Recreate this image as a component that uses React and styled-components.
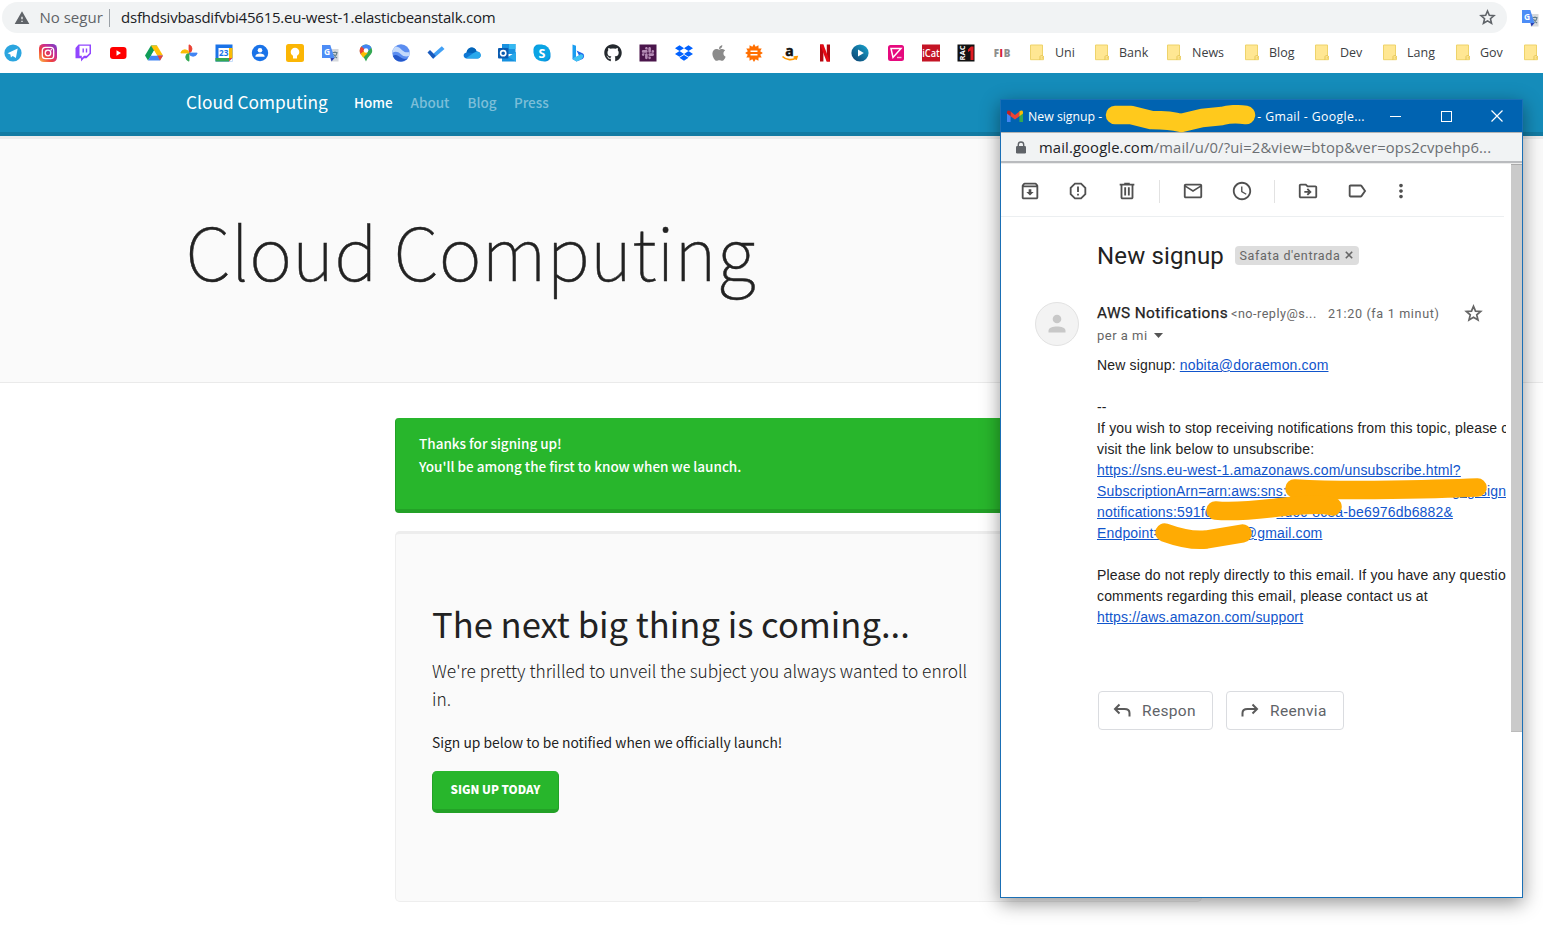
import React from "react";
import styled, { createGlobalStyle } from "styled-components";
import { FaApple, FaDropbox, FaGithub, FaSlack } from "react-icons/fa";
import {
  MdOutlineArchive, MdReportGmailerrorred, MdMailOutline, MdAccessTime,
  MdOutlineDriveFileMove, MdLabelOutline, MdMoreVert, MdWarning,
} from "react-icons/md";

const SANS = `"Noto Sans CJK SC", "Noto Sans CJK JP", sans-serif`;
const UI = `"Open Sans", "Noto Sans", sans-serif`;

const Global = createGlobalStyle`
  * { box-sizing: border-box; }
  html, body { margin: 0; background: #fff; overflow: hidden; }
  h1, h2, p { margin: 0; }
  svg { display: block; flex: none; }
`;
const Screen = styled.div`
  position: relative; width: 1543px; height: 933px; overflow: hidden;
  background: #fff; color: #222; font-family: ${SANS};
`;
const T = styled.span`
  white-space: pre; letter-spacing: ${(p) => p.$ls || 0}px;
`;

/* Browser chrome */
const Chrome = styled.div`height: 73px; display: flex; flex-direction: column; font-family: ${UI};`;
const AddressRow = styled.div`display: flex; align-items: center; padding: 2px 0 0 2px; gap: 14px; height: 33px;`;
const Omnibox = styled.div`
  width: 1505px; height: 31px; border-radius: 16px; background: #f1f3f4; flex: none;
  display: flex; align-items: center; padding: 0 10px 0 12px; font-size: 15px; line-height: 31px; color: #202124;
`;
const Security = styled.div`
  display: flex; align-items: center; gap: 9.5px; width: 95px; color: #5f6368; white-space: nowrap;
`;
const Divider = styled.div`width: 1px; height: 18px; background: #9aa0a6; margin-right: 11px; flex: none;`;
const Grow = styled.div`flex: 1;`;
const Bookmarks = styled.div`display: flex; align-items: center; height: 39px; padding-left: 3px;`;
const FaviconStrip = styled.div`display: flex; width: 1026.5px; flex: none;`;
const Favicon = styled.div`width: 35.34px; height: 20px; flex: none; display: flex; align-items: center; padding-left: 0.5px;`;
const Folder = styled.div`
  width: ${(p) => p.$w}px; flex: none; display: flex; align-items: center; gap: ${(p) => p.$gap}px;
  font-size: 12.5px; color: #3c4043;
`;

/* Site */
const Nav = styled.nav`
  height: 63px; background: #158cba; border-bottom: 4px solid #127ba3;
  display: flex; align-items: center; padding: 0 0 2px 186px; color: #fff;
`;
const Brand = styled.div`font-size: 17.3px; line-height: 24px; width: 168px; white-space: nowrap;`;
const NavLink = styled.div`
  width: ${(p) => p.$w}px; font-size: 13.5px; font-weight: 500; line-height: 24px; white-space: nowrap;
  color: ${(p) => (p.$active ? "#fff" : "rgba(255,255,255,.45)")};
`;
const Hero = styled.header`
  height: 247px; background: #fafafa; border-top: 3px solid #ececec; border-bottom: 1px solid #eaeaea; padding: 70px 0 0 185.5px;
`;
const HeroTitle = styled.h1`
  font-size: 73px; font-weight: 100; line-height: 80px; white-space: nowrap; -webkit-text-stroke: 0.5px #222;
`;
const Content = styled.main`width: 807px; margin: 35px 0 0 395px; display: flex; flex-direction: column; gap: 18px;`;
const Alert = styled.div`
  height: 95px; border-radius: 4px; background: #28b62c; border: 1px solid #23a127; border-width: 0 1px 4px 1px;
  padding: 14px 23px; color: #fff; font-size: 13.5px; line-height: 23px; font-weight: 500;
`;
const Card = styled.section`
  height: 371px; border: 1px solid #eee; border-top: 3px solid #ededed; border-radius: 5px; background: #fafafa;
  padding: 65px 36px; display: flex; flex-direction: column; align-items: flex-start;
`;
const CardTitle = styled.h2`font-size: 34.6px; font-weight: 400; line-height: 48px; white-space: nowrap;`;
const Lead = styled.p`font-size: 17.32px; font-weight: 300; line-height: 28px; margin-top: 10px; white-space: nowrap;`;
const Note = styled.p`font-size: 13.85px; line-height: 23px; margin-top: 18px; color: #222;`;
const SignUp = styled.div`
  width: 127px; height: 42px; margin-top: 17px; border-radius: 5px; background: #28b62c;
  border: 1px solid #23a127; border-width: 0 1px 4px; color: #fff; font-size: 11.6px; font-weight: 900;
  line-height: 37px; text-align: center; white-space: nowrap;
`;

/* Popup window */
const Popup = styled.div`
  position: absolute; left: 1000px; top: 99px; width: 523px; height: 799px; background: #fff;
  border: 1px solid #1a6fb5; box-shadow: 0 5px 18px rgba(0,0,0,.42);
  font-family: Roboto, sans-serif; color: #222;
`;
const TitleBar = styled.div`
  height: 32px; background: #0063b1; display: flex; align-items: center; color: #fff; padding-left: 6px;
  font-family: ${UI}; font-size: 12.3px;
`;
const TitleText = styled.div`display: flex; margin-left: 5px; white-space: pre; width: 342.6px; flex: none;`;
const Redacted = styled.span`width: ${(p) => p.$w}px; display: inline-block; flex: none;`;
const WinButton = styled.div`width: 50.5px; flex: none; display: flex; justify-content: center;`;
const PopupUrl = styled.div`
  height: 31px; background: #f1f3f4; border-top: 1px solid #b4b4b4; border-bottom: 2px solid #b9bbbe;
  display: flex; align-items: center; padding-left: 15px; gap: 13px; font-family: ${UI}; font-size: 14.8px; color: #202124;
  white-space: nowrap;
`;
const Muted = styled.span`color: #6b6f73;`;
const MailArea = styled.div`display: flex; height: 734px; border-top: 1px solid #ececec;`;
const Mail = styled.div`width: 505px; overflow: hidden;`;
const ScrollTrack = styled.div`width: 11px; height: 568px; margin-left: 5px; background: #cacaca; border-top: 1px solid #aaa; border-bottom: 1px solid #bbb;`;
const Toolbar = styled.div`
  height: 53px; width: 503px; border-bottom: 1px solid #eceff1; display: flex; align-items: center;
  padding: 2px 0 0 18px; color: #5f6368;
`;
const Tool = styled.div`width: ${(p) => p.$w}px; display: flex; color: #505050;`;
const Sep = styled.div`width: 1px; height: 23px; background: #e2e2e2; margin-right: ${(p) => p.$r}px;`;
const Subject = styled.div`display: flex; align-items: center; padding: 26px 0 0 96px; height: 52px; font-size: 24px; white-space: nowrap;`;
const SubjectText = styled.div`width: 138px; line-height: 26px;`;
const Chip = styled.div`
  height: 19px; width: 124px; border-radius: 4px; background: #ddd; color: #666; font-size: 12.5px; margin-bottom: 2px;
  display: flex; align-items: center; gap: 5px; padding-left: 4.5px; white-space: nowrap;
`;
const Sender = styled.div`display: flex; padding: 33px 0 0 34px;`;
const Avatar = styled.div`
  width: 44px; height: 44px; border-radius: 50%; background: #f3f3f3; border: 1px solid #e2e2e2;
  display: flex; align-items: center; justify-content: center; margin-right: 18px;
`;
const SenderInfo = styled.div`color: #666; font-size: 12.6px; white-space: nowrap;`;
const SenderLine = styled.div`display: flex; align-items: center; height: 22px;`;
const Name = styled.div`font-size: 15.4px; font-weight: 400; color: #222; width: 134px; -webkit-text-stroke: 0.25px #222;`;
const Addr = styled.div`width: 97px;`;
const Time = styled.div`width: 135px;`;
const ToLine = styled.div`display: flex; align-items: center; gap: 6px; height: 22px; font-size: 13px;`;
const Body = styled.div`
  padding: 9px 0 0 96px; font-family: "Liberation Sans", Arial, sans-serif; font-size: 14px; line-height: 21px; color: #222;
  letter-spacing: 0.155px;
`;
const Line = styled.div`height: 21px; white-space: pre; display: flex;`;
const Link = styled.span`color: #15c; text-decoration: underline;`;
const Scribble = styled.svg`position: absolute; left: ${(p) => p.$x}px; top: ${(p) => p.$y}px; pointer-events: none;`;
const Actions = styled.div`display: flex; gap: 13px; padding: 63px 0 0 97px;`;
const Action = styled.div`
  width: ${(p) => p.$w}px; height: 39px; border: 1px solid #dadce0; border-radius: 4px; display: flex; align-items: center;
  gap: 11px; padding-left: 14px; font-size: 15.5px; color: #5f6368;
`;

const I = ({ children }) => (
  <svg width="18" height="18" viewBox="0 0 18 18" fill="none">{children}</svg>
);
const txt = { fontFamily: "Open Sans, sans-serif", fontWeight: 700, textAnchor: "middle" };

const Star = ({ size, color }) => (
  <svg width={size} height={size} viewBox="0 0 24 24" fill="none">
    <path d="M12 3.800l2.300 5.400 5.900.5-4.500 3.900 1.400 5.700-5.100-3.100-5.100 3.100 1.400-5.700-4.500-3.900 5.900-.5z" stroke={color} strokeWidth="2" />
  </svg>
);
const Lock = () => (
  <svg width="10" height="13" viewBox="0 0 10 13">
    <path d="M2.300 5.500V3.700a2.700 2.700 0 0 1 5.400 0v1.800" fill="none" stroke="#5f6368" strokeWidth="1.400" />
    <rect y="5" width="10" height="7.500" rx="1.200" fill="#5f6368" />
  </svg>
);

const Translate = () => (
  <I>
    <path d="M7 5h10.500v12.500H10z" fill="#d5d8dc" />
    <path d="M11.500 8.500h5M14 7.500v1M16 9c-.8 2.600-2 4-3.500 5M12.500 10c.6 1.800 2 3 3.500 4" stroke="#607d8b" strokeWidth="1.100" />
    <path d="M1 1h8.300l4.200 13H1z" fill="#4d8df6" />
    <path d="M9.500 14h4l-3 3.500z" fill="#2a3fb0" />
    <text x="6" y="10.800" fontSize="8.500" fill="#fff" {...txt}>G</text>
  </I>
);
const Gear = () => {
  const pts = Array.from({ length: 24 }, (_, i) => {
    const r = i % 2 ? 6.4 : 8.9;
    const a = (i * Math.PI) / 12;
    return `${9 + r * Math.cos(a)},${9 + r * Math.sin(a)}`;
  }).join(" ");
  return <I><polygon points={pts} fill="#ff6f00" /><path d="M5.500 7.300h7M5.500 10.700h7" stroke="#fff" strokeWidth="1.500" /></I>;
};

const favicons = [
  <I><circle cx="9" cy="9" r="8.6" fill="#2ba5df" /><path d="M3.500 9.200l10.200-4.600-1.800 9.300-3.200-2-1.800 1.700-.5-3.200z" fill="#fff" /></I>,
  <I>
    <defs>
      <linearGradient id="ig" x1="0" y1="1" x2="1" y2="0">
        <stop offset="0" stopColor="#fdc04d" /><stop offset=".35" stopColor="#f0443c" />
        <stop offset=".65" stopColor="#c92d92" /><stop offset="1" stopColor="#6a3fd0" />
      </linearGradient>
    </defs>
    <rect width="18" height="18" rx="4.500" fill="url(#ig)" />
    <rect x="3.300" y="3.300" width="11.400" height="11.400" rx="3.200" stroke="#fff" strokeWidth="1.300" />
    <circle cx="9" cy="9" r="2.800" stroke="#fff" strokeWidth="1.300" /><circle cx="12.300" cy="5.700" r=".8" fill="#fff" />
  </I>,
  <I>
    <path d="M4.500.5H17v9.300l-4.500 4.500H10L7 17.500v-3.200H1.500V4z" fill="#9146ff" />
    <path d="M5.500 1.800h10v7.300l-2.700 2.700H10L7.800 14v-2.200H5.500z" fill="#fff" />
    <path d="M9.200 4.500v4M12.500 4.500v4" stroke="#9146ff" strokeWidth="1.400" />
  </I>,
  <I><rect x="1" y="3" width="16.500" height="12" rx="3" fill="#f00" /><path d="M7.500 6.300v5.400L12 9z" fill="#fff" /></I>,
  <I>
    <path d="M6 1.500h6L6 12l-3 4.500L0 11.500z" fill="#0f9d58" /><path d="M6 1.500h6l6 10h-6z" fill="#ffc107" />
    <path d="M6 11.500h12l-3 5H3z" fill="#4285f4" /><path d="M12.500 11.500H18l-3 5z" fill="#ea4335" /><path d="M9 6.500l3 5H6z" fill="#fff" />
  </I>,
  <I>
    <path d="M9 9V.8A4.300 4.300 0 0 1 9 9z" fill="#ea4335" stroke="#ea4335" strokeWidth=".8" /><path d="M9 9h8.200A4.200 4.200 0 0 1 9 9z" fill="#4285f4" stroke="#4285f4" strokeWidth=".8" />
    <path d="M9 9v8.200A4.200 4.200 0 0 1 9 9z" fill="#34a853" stroke="#34a853" strokeWidth=".8" /><path d="M9 9H.8A4.200 4.200 0 0 1 9 9z" fill="#fbbc04" stroke="#fbbc04" strokeWidth=".8" />
  </I>,
  <I>
    <rect x=".5" y=".5" width="17" height="17" fill="#1a73e8" /><path d="M14 4h3.500v10H14z" fill="#fbbc04" />
    <path d="M.5 14H14v3.500H.5z" fill="#34a853" /><path d="M14 14h3.500L14 17.500z" fill="#ea4335" /><path d="M14 17.500 17.500 14v3.500z" fill="#fff" />
    <rect x="3.500" y="4" width="10.500" height="10" fill="#fff" /><text x="8.800" y="12" fontSize="8.200" fill="#1a73e8" {...txt}>23</text>
  </I>,
  <I><circle cx="9" cy="9" r="8.200" fill="#1a73e8" /><circle cx="9" cy="6.200" r="2.300" fill="#fff" /><path d="M4.400 12.300c0-3.600 9.200-3.600 9.200 0v.5H4.400z" fill="#fff" /></I>,
  <I><rect width="18" height="18" rx="2.500" fill="#fbb605" /><circle cx="9" cy="8" r="4.300" fill="#fff" /><path d="M7 11h4v3.500H7z" fill="#fff" /></I>,
  <Translate />,
  <I>
    <path d="M9 .5a6.200 6.200 0 0 1 6.200 6.200c0 4-4.200 5.300-6.200 10.800C7 12 2.800 10.700 2.800 6.700A6.200 6.200 0 0 1 9 .5z" fill="#34a853" />
    <path d="M9 .5a6.200 6.200 0 0 1 5.400 3.200L9 9 4.400 2.600A6.200 6.200 0 0 1 9 .5z" fill="#4285f4" />
    <path d="M4.400 2.600 9 6.500 4 10.700C1.900 8 2.400 4.600 4.400 2.600z" fill="#ea4335" /><path d="M3.500 9.800 8.500 6l2 3.200-4.300 4.600z" fill="#fbbc04" />
    <circle cx="9" cy="6.500" r="2.300" fill="#fff" />
  </I>,
  <I>
    <circle cx="9" cy="9" r="8.700" fill="#5b8df0" /><path d="M.3 9A8.700 8.700 0 0 1 3 2.700c3-.9 5.400 1.800 7.500 3.800s4.500 2 7 1.500c.4 2 0 3-.4 4-3 1-6 .5-8.500-2S3 7 .3 9z" fill="#c3d9fb" />
    <path d="M.8 12c3-2.500 6 0 8 1.500s5 2 7 .5c-3.500 5-12 5-15-2z" fill="#2558c9" />
  </I>,
  <I><path d="M6.200 14.800 3.800 12 14.800 2.200 17.500 5z" fill="#41a0f5" /><path d="M.5 8.500 3 6l5.700 5.800-2.600 2.900z" fill="#185abd" /></I>,
  <I><path d="M4 14.500C-.5 14.500-.3 9 3.500 8.500 4.500 2.500 12 2 13.500 7.200c5.500.3 5.500 7.300.8 7.300z" fill="#0f78d4" /><path d="M3 14.300 10.500 9l3-1.500c5.500.3 5.500 7 .8 7z" fill="#2aa9ec" /><path d="M3.500 8.500C4.500 2.500 12 2 13.500 7.200L10 9z" fill="#0364b8" /></I>,
  <I>
    <rect x="4" y="0" width="13.500" height="10" fill="#1a92e0" /><path d="M11 0h6.500v5H11z" fill="#35b8f1" /><path d="M4 8.500 11 13l7-5v9.500H4z" fill="#1490df" />
    <path d="M18 8v9.500L10 13z" fill="#28a8ea" /><rect x="0" y="4" width="10.500" height="10.500" rx="1" fill="#0a5bb0" /><circle cx="5.200" cy="9.200" r="2.600" stroke="#fff" strokeWidth="1.600" />
  </I>,
  <I><rect x=".5" y=".5" width="12" height="12" rx="5" fill="#0a9ee0" /><rect x="6" y="5.500" width="11.500" height="12" rx="5" fill="#0a8fdc" /><circle cx="9" cy="9" r="8.300" fill="#0aa4e4" /><text x="9" y="13.500" fontSize="12.500" fill="#fff" {...txt}>S</text></I>,
  <I><path d="M3.500.5 7 1.800v11l-3.500 2.500z" fill="#1a9df0" /><path d="M7.500 6.500 14 9.500c2 2 1 4.500-.5 5.500L7.500 17.500 3.500 15l6.500-3.500z" fill="#2069ea" /><path d="M3.500 15 12 10l2.500 1.500c0 3-4 5-7 6z" fill="#3fc3f2" /></I>,
  <FaGithub size={18} color="#24292e" />,
  <I><rect x=".5" y=".5" width="17" height="17" fill="#4a154b" /><g transform="translate(2 2)"><FaSlack size={14} color="#b48bb5" /></g></I>,
  <FaDropbox size={18} color="#0061ff" />,
  <FaApple size={18} color="#8b8b8b" />,
  <Gear />,
  <I><text x="8.500" y="11.500" fontSize="14" fill="#111" stroke="#111" strokeWidth=".5" {...txt}>a</text><path d="M1.500 12.500c4 4 10 4 13.500 1.300M12.500 13l3.500-.3-1 3" stroke="#f90" strokeWidth="1.700" /></I>,
  <I><path d="M4 .5h3.400v17H4z M10.800.5H14v17h-3.200z" fill="#b1060f" /><path d="M4 .5h3.400l6.600 17h-3.400z" fill="#e50914" /></I>,
  <I><defs><linearGradient id="pl" x1="0" y1="1" x2="1" y2="0"><stop offset="0" stopColor="#0c3d6b" /><stop offset="1" stopColor="#18a6d0" /></linearGradient></defs><circle cx="9" cy="9" r="8.600" fill="url(#pl)" /><path d="M7 5.500v7L12.800 9z" fill="#fff" /></I>,
  <I><rect x="1" y="1" width="16" height="16" rx="2.500" fill="#e6097e" /><path d="M4 4.500h10L6 13.500z" stroke="#fff" strokeWidth="1.500" /><path d="M10 13.500h4.500" stroke="#f9b8db" strokeWidth="1.400" /></I>,
  <I><rect y=".5" width="18" height="17" fill="#c41425" /><text x="9" y="13" fontSize="10" fill="#fff" textLength="17.500" lengthAdjust="spacingAndGlyphs" {...txt} fontWeight="600">iCat</text></I>,
  <I><rect x=".5" y=".5" width="17" height="17" fill="#111" /><text transform="translate(8.200 9) rotate(-90)" fontSize="7.500" fill="#fff" {...txt}>RAC</text><path d="M11 5.500 14 2.500h2.500V16h-3V6.500L11 8z" fill="#e01b22" /></I>,
  <I><text x="3.300" y="12.700" fontSize="9.800" fill="#8e8e8e" {...txt} fontWeight="800">F</text><text x="8.300" y="12.700" fontSize="9.800" fill="#d3203c" {...txt} fontWeight="800">I</text><text x="14" y="12.700" fontSize="9.800" fill="#8e8e8e" {...txt} fontWeight="800">B</text></I>,
];

const FolderIcon = () => (
  <svg width="14" height="17" viewBox="0 0 14 17">
    <path d="M.5 1h12v11l1 1.500v2.200H.5z" fill="#ffe793" stroke="#eed36b" />
    <path d="M10 16v-3.500c0-1.200 3.500-1.200 3.500 0 0 1-.500 1.500-1.800 1.500" fill="#ffe793" stroke="#e5c555" />
  </svg>
);
const folders = [
  ["Uni", 65, 11.5], ["Bank", 72, 10.5], ["News", 78, 11.5], ["Blog", 70, 10.5], ["Dev", 68, 11.5], ["Lang", 73, 10.5], ["Gov", 68, 10.5], ["", 20, 0],
];

export default function App() {
  return (
    <Screen>
      <Global />
      <Chrome>
        <AddressRow>
          <Omnibox>
            <Security><MdWarning size={16} /><T>No segur</T></Security>
            <Divider />
            <T $ls={-0.22}>dsfhdsivbasdifvbi45615.eu-west-1.elasticbeanstalk.com</T>
            <Grow />
            <Star size={19} color="#5f6368" />
          </Omnibox>
          <Translate />
        </AddressRow>
        <Bookmarks>
          <FaviconStrip>{favicons.map((icon, i) => <Favicon key={i}>{icon}</Favicon>)}</FaviconStrip>
          {folders.map(([name, w, gap]) => (
            <Folder key={name} $w={w} $gap={gap}><FolderIcon /><T>{name}</T></Folder>
          ))}
        </Bookmarks>
      </Chrome>

      <Nav>
        <Brand>Cloud Computing</Brand>
        <NavLink $w={56.5} $active>Home</NavLink>
        <NavLink $w={57}>About</NavLink>
        <NavLink $w={46.5}>Blog</NavLink>
        <NavLink $w={50}>Press</NavLink>
      </Nav>
      <Hero><HeroTitle>Cloud Computing</HeroTitle></Hero>
      <Content>
        <Alert>Thanks for signing up!<br />You'll be among the first to know when we launch.</Alert>
        <Card>
          <CardTitle>The next big thing is coming...</CardTitle>
          <Lead>We're pretty thrilled to unveil the subject you always wanted to enroll<br />in.</Lead>
          <Note>Sign up below to be notified when we officially launch!</Note>
          <SignUp>SIGN UP TODAY</SignUp>
        </Card>
      </Content>

      <Popup>
        <TitleBar>
          <svg width="16" height="12" viewBox="0 0 16 12">
            <path d="M0 1.500V12h3.600V5z" fill="#4285f4" /><path d="M16 1.500V12h-3.600V5z" fill="#34a853" />
            <path d="M3.600 1.500 8 5l4.400-3.500v4.700L8 9.500 3.600 6.200z" fill="#ea4335" /><path d="M0 2C0 0 2 0 3.600 1.300v4.900L0 3.500z" fill="#c5221f" /><path d="M16 2c0-2-2-2-3.600-.7v4.900L16 3.500z" fill="#fbbc04" />
          </svg>
          <TitleText><T>New signup -</T><Redacted $w={155} /><T $ls={0.35}>- Gmail - Google...</T></TitleText>
          <WinButton><svg width="11" height="11"><path d="M0 5.500h11" stroke="#fff" /></svg></WinButton>
          <WinButton><svg width="11" height="11"><rect x=".5" y=".5" width="10" height="10" fill="none" stroke="#fff" /></svg></WinButton>
          <WinButton><svg width="12" height="12"><path d="M.5.5l11 11M11.500.5l-11 11" stroke="#fff" strokeWidth="1.200" /></svg></WinButton>
        </TitleBar>
        <PopupUrl>
          <Lock />
          <T $ls={0.13}>mail.google.com<Muted>/mail/u/0/?ui=2&amp;view=btop&amp;ver=ops2cvpehp6...</Muted></T>
        </PopupUrl>
        <MailArea>
          <Mail>
            <Toolbar>
              <Tool $w={48}><MdOutlineArchive size={22} /></Tool>
              <Tool $w={49}><MdReportGmailerrorred size={22} /></Tool>
              <Tool $w={43}>
                <svg width="22" height="22" viewBox="0 0 24 24" fill="#505050"><path d="M15 4V3H9v1H4v2h1v13c0 1.100.9 2 2 2h10c1.100 0 2-.9 2-2V6h1V4h-5zm2 15H7V6h10v13zM9 8h2v9H9V8zm4 0h2v9h-2V8z" /></svg>
              </Tool>
              <Sep $r={22} />
              <Tool $w={49}><MdMailOutline size={22} /></Tool>
              <Tool $w={43}><MdAccessTime size={22} /></Tool>
              <Sep $r={22} />
              <Tool $w={49}><MdOutlineDriveFileMove size={22} /></Tool>
              <Tool $w={44}><MdLabelOutline size={22} /></Tool>
              <Tool $w={22}><MdMoreVert size={22} /></Tool>
            </Toolbar>
            <Subject>
              <SubjectText><T $ls={0.15}>New signup</T></SubjectText>
              <Chip><T $ls={0.65}>Safata d'entrada</T><svg width="8" height="8"><path d="M.8.8l6.400 6.400M7.200.8.8 7.200" stroke="#666" strokeWidth="1.600" /></svg></Chip>
            </Subject>
            <Sender>
              <Avatar><svg width="18" height="20" viewBox="0 0 18 20" fill="#c8c8c8"><circle cx="9" cy="5" r="4.300" /><path d="M.5 18.500v-1.800c0-5.500 17-5.500 17 0v1.800z" /></svg></Avatar>
              <SenderInfo>
                <SenderLine>
                  <Name><T $ls={0.4}>AWS Notifications</T></Name>
                  <Addr><T $ls={0.5}>&lt;no-reply@s...</T></Addr>
                  <Time><T $ls={0.65}>21:20 (fa 1 minut)</T></Time>
                  <Star size={21} color="#666" />
                </SenderLine>
                <ToLine><T $ls={0.5}>per a mi</T><svg width="9" height="5"><path d="M0 0h9L4.500 5z" fill="#555" /></svg></ToLine>
              </SenderInfo>
            </Sender>
            <Body>
              <Line>New signup: <Link>nobita@doraemon.com</Link></Line>
              <Line />
              <Line>--</Line>
              <Line>If you wish to stop receiving notifications from this topic, please c</Line>
              <Line>visit the link below to unsubscribe:</Line>
              <Line><Link>https://sns.eu-west-1.amazonaws.com/unsubscribe.html?</Link></Line>
              <Line><Link>SubscriptionArn=arn:aws:sns:</Link><Redacted $w={165} /><Link>gsg-sign</Link></Line>
              <Line><Link>notifications:591fc</Link><Redacted $w={64.5} /><Link>4d0c-8c8a-be6976db6882&amp;</Link></Line>
              <Line><Link>Endpoint=</Link><Redacted $w={81} /><Link>@gmail.com</Link></Line>
              <Line />
              <Line>Please do not reply directly to this email. If you have any questio</Line>
              <Line>comments regarding this email, please contact us at</Line>
              <Line><Link>https://aws.amazon.com/support</Link></Line>
            </Body>
            <Actions>
              <Action $w={115}>
                <svg width="18" height="15" viewBox="0 0 18 15" fill="none" stroke="#5a5a5a" strokeWidth="2"><path d="M6.500 1.500 2 6l4.500 4.500M2 6h9.500C15 6 16.500 8 16.500 10v3.500" /></svg>
                <T $ls={0.35}>Respon</T>
              </Action>
              <Action $w={118}>
                <svg width="18" height="15" viewBox="0 0 18 15" fill="none" stroke="#5a5a5a" strokeWidth="2"><path d="M11.500 1.500 16 6l-4.500 4.500M16 6H6.500C3 6 1.500 8 1.500 10v3.500" /></svg>
                <T $ls={0.35}>Reenvia</T>
              </Action>
            </Actions>
          </Mail>
          <ScrollTrack />
        </MailArea>
        <Scribble $x={104} $y={5} width="152" height="28" viewBox="0 0 152 28">
          <path d="M10 11h16l20 5q20 0 30 3l21-5 20-2q10-3 24-1" fill="none" stroke="#ffc91c" strokeWidth="18.500" strokeLinecap="round" strokeLinejoin="round" transform="translate(0 -1)" />
        </Scribble>
        <Scribble $x={150} $y={370} width="345" height="85" viewBox="0 0 345 85" fill="none" stroke="#ffab03" strokeLinecap="round" strokeLinejoin="round">
          <path d="M143.500 18.500q35 2 80 1.500 70-1 103-2.500" strokeWidth="18.500" />
          <path d="M64.500 40.500q20 2 62-3t55-1" strokeWidth="18.500" />
          <path d="M13.500 62.500q25 9 42 7l36-6" strokeWidth="18.500" />
        </Scribble>
      </Popup>
    </Screen>
  );
}
